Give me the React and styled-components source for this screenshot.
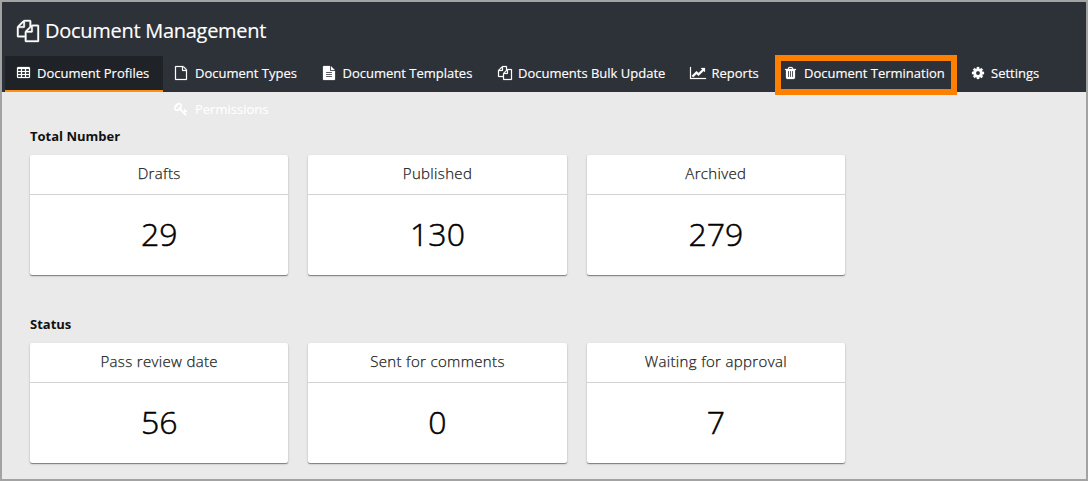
import React from "react";
import styled, { createGlobalStyle } from "styled-components";

const GlobalStyle = createGlobalStyle`
  * { box-sizing: border-box; }
  body {
    margin: 0;
    font-family: "Open Sans", "Noto Sans", sans-serif;
  }
`;

const Frame = styled.div`
  width: 1088px;
  height: 481px;
  overflow: hidden;
  border: 2px solid #a3a3a3;
  background: #eaeaea;
`;

const Header = styled.header`
  height: 90px;
  background: #2d3138;
  color: #fff;
`;

const Title = styled.h1`
  display: flex;
  align-items: center;
  gap: 6px;
  height: 54px;
  margin: 0;
  padding: 4px 0 0 15px;
  font-size: 20px;
  font-weight: 400;
  line-height: 28px;
  letter-spacing: -0.28px;
  -webkit-text-stroke: 0.15px currentColor;
`;

const Nav = styled.nav`
  display: flex;
  height: 36px;
  padding-left: 3px;
`;

const NavGroup = styled.div`
  display: flex;
  flex-wrap: wrap;
  align-content: flex-start;
  width: 920px;
`;

const NavItem = styled.a`
  position: relative;
  display: flex;
  align-items: center;
  flex: none;
  width: ${(p) => p.$width}px;
  height: 36px;
  padding: 0 0 2px 12px;
  color: #fff;
  font-size: 13px;
  white-space: nowrap;
  -webkit-text-stroke: 0.15px currentColor;
  background: ${(p) => (p.$active ? "#1f2226" : "transparent")};
  box-shadow: ${(p) => (p.$active ? "inset 0 -2px 0 #ff8f0f" : "none")};
`;

const IconSlot = styled.span`
  display: flex;
  flex: none;
  width: ${(p) => p.$width}px;
`;

const Highlight = styled.span`
  position: absolute;
  top: -1px;
  left: 2px;
  width: 182px;
  height: 40px;
  border: 6px solid #ff8000;
`;

const Glyph = styled.svg`
  display: block;
  flex: none;
  height: ${(p) => p.$size}px;
  overflow: visible;
  fill: currentColor;
  stroke: currentColor;
  stroke-width: 30px;
`;

const Section = styled.section`
  height: 188px;
  padding: 34px 0 0 28px;
`;

const SectionTitle = styled.h2`
  margin: 0 0 9px;
  color: #111;
  font-size: 13px;
  font-weight: 700;
  line-height: 20px;
`;

const Cards = styled.div`
  display: grid;
  grid-template-columns: repeat(3, 1fr);
  gap: 20px;
  width: 815px;
`;

const Card = styled.article`
  height: 120px;
  border-radius: 2px;
  background: #fff;
  box-shadow: 0 1px 1px rgba(0, 0, 0, 0.42), 0 1px 3px rgba(0, 0, 0, 0.12);
  text-align: center;
`;

const CardTitle = styled.h3`
  height: 40px;
  margin: 0;
  border-bottom: 1px solid #d3d3d3;
  color: #222;
  font-size: 15px;
  font-weight: 300;
  line-height: 36px;
  letter-spacing: 0.34px;
  -webkit-text-stroke: 0.25px currentColor;
`;

const CardValue = styled.div`
  color: #000;
  font-size: 32px;
  font-weight: 300;
  line-height: 78px;
  -webkit-text-stroke: 0.5px currentColor;
`;

const ICONS = {
  files: ["0 0 1792 1792", "M1696 384q40 0 68 28t28 68v1216q0 40-28 68t-68 28h-960q-40 0-68-28t-28-68v-288h-544q-40 0-68-28t-28-68v-672q0-40 20-88t48-76l408-408q28-28 76-48t88-20h416q40 0 68 28t28 68v328q68-40 128-40h416zm-544 213l-299 299h299v-299zm-640-384l-299 299h299v-299zm196 647l316-316v-416h-384v416q0 40-28 68t-68 28h-416v640h512v-256q0-40 20-88t48-76zm956 804v-1152h-384v416q0 40-28 68t-68 28h-416v640h896z"],
  table: ["64 0 1664 1792", "M224 128h1344q66 0 113 47t47 113v1088q0 66-47 113t-113 47h-1344q-66 0-113-47t-47-113v-1088q0-66 47-113t113-47zM192 384v256h384v-256zM704 384v256h384v-256zM1216 384v256h384v-256zM192 768v256h384v-256zM704 768v256h384v-256zM1216 768v256h384v-256zM192 1152v256h384v-256zM704 1152v256h384v-256zM1216 1152v256h384v-256z"],
  file: ["128 0 1536 1792", "M1596 380q28 28 48 76t20 88v1152q0 40-28 68t-68 28h-1344q-40 0-68-28t-28-68v-1600q0-40 28-68t68-28h896q40 0 88 20t76 48zm-444-244v376h376q-10-29-22-41l-313-313q-12-12-41-22zm384 1528v-1024h-416q-40 0-68-28t-28-68v-416h-768v1536h1280z"],
  fileText: ["128 0 1536 1792", "M1596 476q14 14 28 36h-472v-472q22 14 36 28zm-476 164h544v1056q0 40-28 68t-68 28h-1344q-40 0-68-28t-28-68v-1600q0-40 28-68t68-28h800v544q0 40 28 68t68 28zm160 736v-64q0-14-9-23t-23-9h-704q-14 0-23 9t-9 23v64q0 14 9 23t23 9h704q14 0 23-9t9-23zm0-256v-64q0-14-9-23t-23-9h-704q-14 0-23 9t-9 23v64q0 14 9 23t23 9h704q14 0 23-9t9-23zm0-256v-64q0-14-9-23t-23-9h-704q-14 0-23 9t-9 23v64q0 14 9 23t23 9h704q14 0 23-9t9-23z"],
  chart: ["0 0 2048 1792", "M2048 1536v128h-2048v-1536h128v1408h1920zm-128-1248v435q0 21-19.5 29.5t-35.5-7.5l-121-121-633 633q-10 10-23 10t-23-10l-233-233-416 416-192-192 585-585q10-10 23-10t23 10l233 233 464-464-121-121q-16-16-7.5-35.5t29.5-19.5h435q14 0 23 9t9 23z"],
  trash: ["192 0 1408 1792", "M704 1376v-704q0-14-9-23t-23-9h-64q-14 0-23 9t-9 23v704q0 14 9 23t23 9h64q14 0 23-9t9-23zm256 0v-704q0-14-9-23t-23-9h-64q-14 0-23 9t-9 23v704q0 14 9 23t23 9h64q14 0 23-9t9-23zm256 0v-704q0-14-9-23t-23-9h-64q-14 0-23 9t-9 23v704q0 14 9 23t23 9h64q14 0 23-9t9-23zm-544-992h448l-48-117q-7-9-17-11h-317q-10 2-17 11zm928 32v64q0 14-9 23t-23 9h-96v948q0 83-47 143.5t-113 60.5h-832q-66 0-113-58.5t-47-141.5v-952h-96q-14 0-23-9t-9-23v-64q0-14 9-23t23-9h309l70-167q15-37 54-63t79-26h320q40 0 79 26t54 63l70 167h309q14 0 23 9t9 23z"],
  cog: ["128 0 1536 1792", "M1152 896q0-106-75-181t-181-75-181 75-75 181 75 181 181 75 181-75 75-181zm512-109v222q0 12-8 23t-20 13l-185 28q-19 54-39 91 35 50 107 138 10 12 10 25t-9 23q-27 37-99 108t-94 71q-12 0-26-9l-138-108q-44 23-91 38-16 136-29 186-7 28-36 28h-222q-14 0-24.5-8.5t-11.5-21.5l-28-184q-49-16-90-37l-141 107q-10 9-25 9-14 0-25-11-126-114-165-168-7-10-7-23 0-12 8-23 15-21 51-66.5t54-70.5q-27-50-41-99l-183-27q-13-2-21-12.5t-8-23.5v-222q0-12 8-23t19-13l186-28q14-46 39-92-40-57-107-138-10-12-10-24 0-10 9-23 26-36 98.5-107.5t94.5-71.5q13 0 26 10l138 107q44-23 91-38 16-136 29-186 7-28 36-28h222q14 0 24.5 8.5t11.5 21.5l28 184q49 16 90 37l142-107q9-9 24-9 13 0 25 10 129 119 165 170 7 8 7 22 0 12-8 23-15 21-51 66.5t-54 70.5q26 50 41 98l183 28q13 2 21 12.5t8 23.5z"],
  key: ["128 0 1664 1792", "M832 512q0-80-56-136t-136-56-136 56-56 136q0 42 19 83-41-19-83-19-80 0-136 56t-56 136 56 136 136 56 136-56 56-136q0-42-19-83 41 19 83 19 80 0 136-56t56-136zm851 704q0 17-49 66t-66 49q-9 0-28.5-16t-36.5-33-38.5-40-24.5-26l-96 96 220 220q28 28 28 68 0 42-39 81t-81 39q-40 0-68-28l-671-671q-176 131-365 131-163 0-265.5-102.5t-102.5-265.5q0-160 95-313t248-248 313-95q163 0 265.5 102.5t102.5 265.5q0 189-131 365l355 355 96-96q-3-3-26-24.5t-40-38.5-33-36.5-16-28.5q0-17 49-66t66-49q13 0 23 10 6 6 46 44.5t82 79.5 86.5 86 73 78 28.5 41z"],
};

const NAV = [
  { label: "Document Types", icon: "file", width: 148, slot: 20 },
  { label: "Document Templates", icon: "fileText", width: 175, slot: 19.5 },
  { label: "Documents Bulk Update", icon: "files", width: 192, slot: 20 },
  { label: "Reports", icon: "chart", width: 95, slot: 21.5 },
  { label: "Document Termination", icon: "trash", width: 187, slot: 19, highlighted: true },
  { label: "Settings", icon: "cog", width: 100, slot: 19 },
  { label: "Permissions", icon: "key", width: 148, slot: 20 },
];

const SECTIONS = [
  { title: "Total Number", cards: [["Drafts", 29], ["Published", 130], ["Archived", 279]] },
  { title: "Status", cards: [["Pass review date", 56], ["Sent for comments", 0], ["Waiting for approval", 7]] },
];

function Icon({ name, size = 14 }) {
  const [viewBox, d] = ICONS[name];
  return (
    <Glyph viewBox={viewBox} $size={size} aria-hidden="true">
      <path d={d} fillRule={name === "table" ? "evenodd" : "nonzero"} />
    </Glyph>
  );
}

function NavLink({ label, icon, width, slot, active, highlighted }) {
  return (
    <NavItem $width={width} $active={active}>
      <IconSlot $width={slot}>
        <Icon name={icon} />
      </IconSlot>
      {label}
      {highlighted && <Highlight />}
    </NavItem>
  );
}

export default function App() {
  return (
    <Frame>
      <GlobalStyle />
      <Header>
        <Title>
          <Icon name="files" size={22} />
          Document Management
        </Title>
        <Nav>
          <NavLink label="Document Profiles" icon="table" width={158} slot={20} active />
          <NavGroup>
            {NAV.map((item) => (
              <NavLink key={item.label} {...item} />
            ))}
          </NavGroup>
        </Nav>
      </Header>
      <main>
        {SECTIONS.map((section) => (
          <Section key={section.title}>
            <SectionTitle>{section.title}</SectionTitle>
            <Cards>
              {section.cards.map(([label, value]) => (
                <Card key={label}>
                  <CardTitle>{label}</CardTitle>
                  <CardValue>{value}</CardValue>
                </Card>
              ))}
            </Cards>
          </Section>
        ))}
      </main>
    </Frame>
  );
}
